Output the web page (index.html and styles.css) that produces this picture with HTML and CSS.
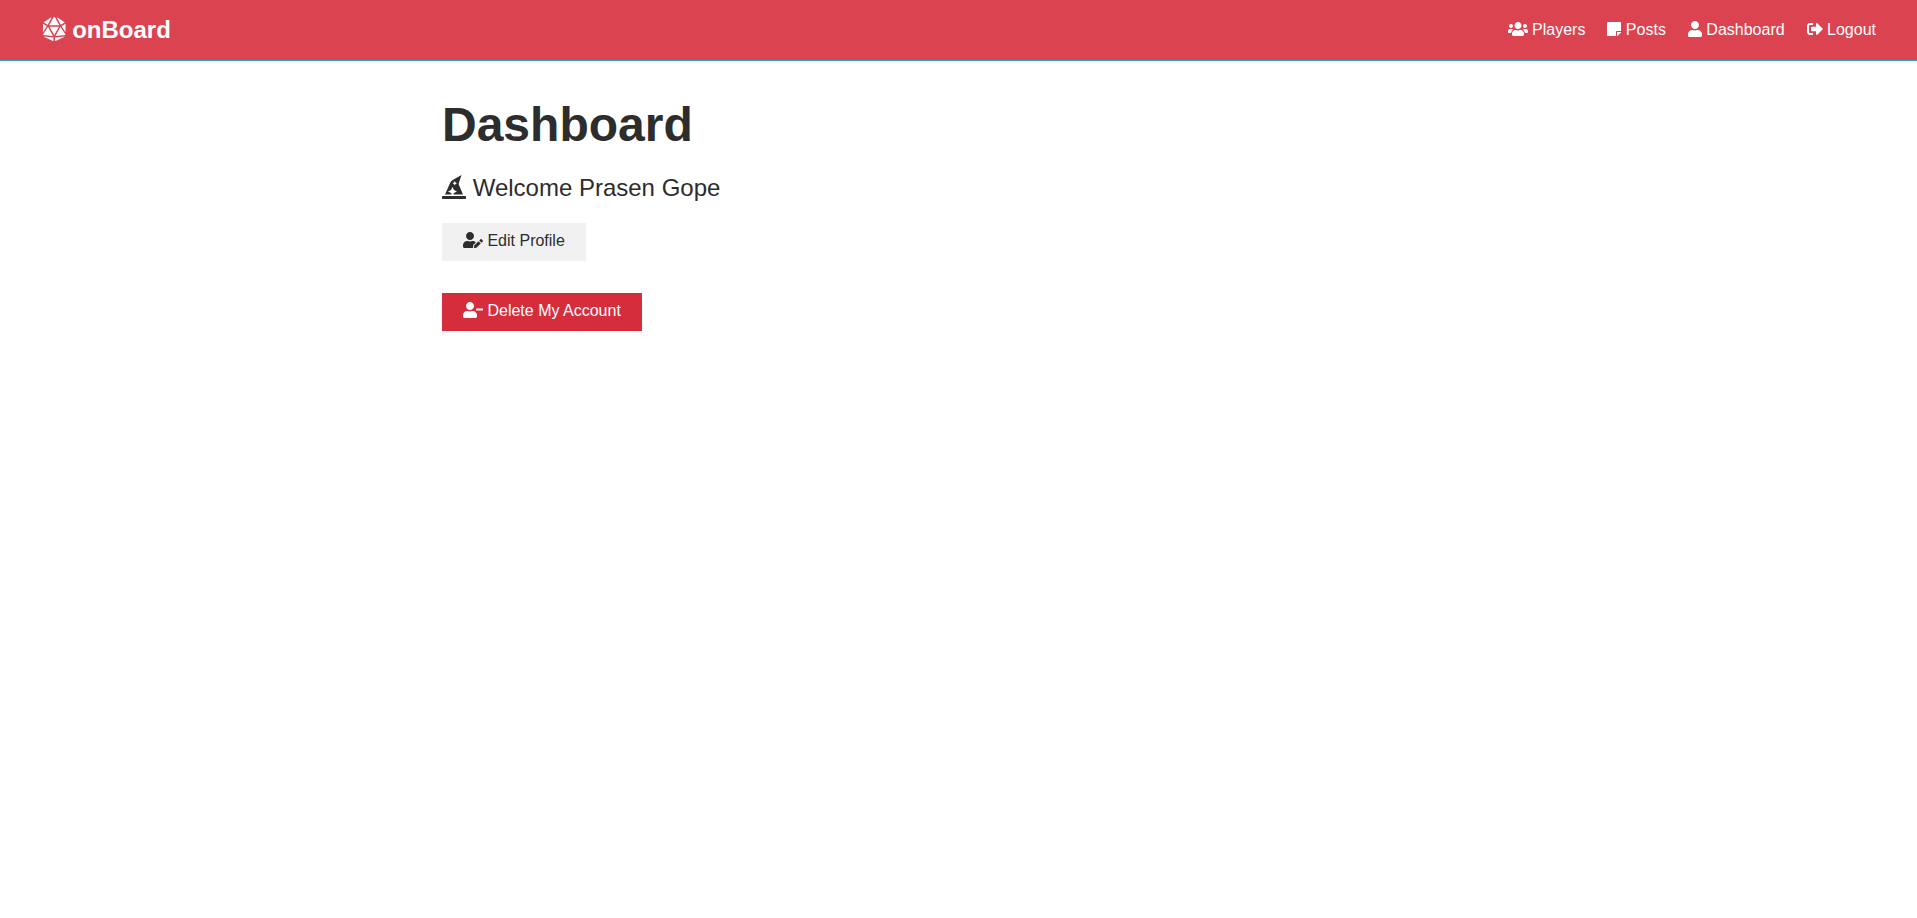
FILE: index.html
```
<!DOCTYPE html>
<html lang="en">
<head>
<meta charset="utf-8">
<meta name="viewport" content="width=device-width, initial-scale=1">
<title>onBoard</title>
<link rel="stylesheet" href="styles.css">
</head>
<body>
<nav class="navbar">
  <h1 class="brand"><a class="nav-link" href="#"><svg class="icon icon-large" viewBox="0 0 480 512" aria-hidden="true"><path d="M106.75 215.06L1.2 370.95c-3.08 5 .1 11.5 5.93 12.14l208.26 22.07-108.64-190.1zM7.41 315.43L82.7 193.08 6.06 147.1c-2.67-1.62-6.06.32-6.06 3.45v162.81c0 4.03 5.29 5.53 7.41 2.07zM18.25 423.6l194.4 87.66c5.3 2.45 11.35-1.43 11.35-7.26v-65.67l-203.55-22.3c-4.45-.5-6.23 5.59-2.2 7.57zm81.22-257.78L179.4 22.88c4.34-7.06-3.59-15.25-10.78-11.14L17.81 110.35c-2.47 1.62-2.39 5.26.13 6.78l81.53 48.69zM240 176h109.21L253.63 7.62C250.5 2.54 245.25 0 240 0s-10.5 2.54-13.63 7.62L130.79 176H240zm233.94-28.9l-76.64 45.99 75.29 122.35c2.11 3.46 7.41 1.96 7.41-2.07V150.55c0-3.13-3.39-5.07-6.06-3.45zm-93.41 18.72l81.53-48.7c2.53-1.52 2.6-5.16.13-6.78l-150.81-98.6c-7.19-4.11-15.12 4.08-10.78 11.14l79.93 142.94zm79.02 250.21L256 438.32v65.67c0 5.84 6.05 9.71 11.35 7.26l194.4-87.66c4.03-1.97 2.25-8.06-2.2-7.56zm-86.3-200.97l-108.63 190.1 208.26-22.07c5.83-.65 9.01-7.14 5.93-12.14L373.25 215.06zM240 208H139.57L240 383.75 340.43 208H240z"/></svg> onBoard</a></h1>
  <ul class="nav-list">
    <li><a class="nav-link" href="#"><svg class="icon icon-wide" viewBox="0 0 640 512" aria-hidden="true"><path d="M96 224c35.300 0 64-28.700 64-64s-28.700-64-64-64-64 28.700-64 64 28.700 64 64 64zm448 0c35.300 0 64-28.700 64-64s-28.700-64-64-64-64 28.700-64 64 28.700 64 64 64zm32 32h-64c-17.600 0-33.500 7.100-45.100 18.600 40.300 22.100 68.900 62 75.100 109.400h66c17.700 0 32-14.300 32-32v-32c0-35.300-28.700-64-64-64zm-256 0c61.900 0 112-50.100 112-112S381.900 32 320 32 208 82.100 208 144s50.100 112 112 112zm76.800 32h-8.300c-20.800 10-43.900 16-68.500 16s-47.600-6-68.500-16h-8.300C179.600 288 128 339.600 128 403.200V432c0 26.500 21.500 48 48 48h288c26.500 0 48-21.500 48-48v-28.800c0-63.600-51.600-115.200-115.200-115.200zm-223.700-13.400C161.500 263.100 145.600 256 128 256H64c-35.300 0-64 28.700-64 64v32c0 17.700 14.300 32 32 32h65.900c6.300-47.400 34.900-87.300 75.200-109.400z"/></svg> Players</a></li>
    <li><a class="nav-link" href="#"><svg class="icon" viewBox="0 0 448 512" aria-hidden="true"><path d="M312 320h136V56c0-13.300-10.700-24-24-24H24C10.700 32 0 42.700 0 56v400c0 13.300 10.700 24 24 24h264V344c0-13.200 10.800-24 24-24zm129 55l-98 98c-4.500 4.500-10.600 7-17 7h-6V352h128v6.100c0 6.300-2.500 12.400-7 16.900z"/></svg> Posts</a></li>
    <li><a class="nav-link" href="#"><svg class="icon" viewBox="0 0 448 512" aria-hidden="true"><path d="M224 256c70.700 0 128-57.300 128-128S294.700 0 224 0 96 57.300 96 128s57.300 128 128 128zm89.600 32h-16.700c-22.200 10.200-46.900 16-72.900 16s-50.600-5.800-72.900-16h-16.700C60.200 288 0 348.200 0 422.400V464c0 26.500 21.500 48 48 48h352c26.500 0 48-21.500 48-48v-41.600c0-74.200-60.200-134.400-134.400-134.400z"/></svg> Dashboard</a></li>
    <li><a class="nav-link" href="#"><svg class="icon" viewBox="0 0 512 512" aria-hidden="true"><path d="M497 273L329 441c-15 15-41 4.500-41-17v-96H152c-13.300 0-24-10.700-24-24v-96c0-13.300 10.700-24 24-24h136V88c0-21.400 25.900-32 41-17l168 168c9.300 9.400 9.300 24.600 0 34zM192 436v-40c0-6.600-5.400-12-12-12H96c-17.700 0-32-14.300-32-32V160c0-17.700 14.300-32 32-32h84c6.600 0 12-5.400 12-12V76c0-6.600-5.400-12-12-12H96c-53 0-96 43-96 96v192c0 53 43 96 96 96h84c6.600 0 12-5.400 12-12z"/></svg> Logout</a></li>
  </ul>
</nav>
<main class="container">
  <h1 class="title">Dashboard</h1>
  <p class="lead"><svg class="icon icon-large" viewBox="0 0 512 512" aria-hidden="true"><path d="M496 448H16c-8.840 0-16 7.160-16 16v32c0 8.840 7.160 16 16 16h480c8.840 0 16-7.160 16-16v-32c0-8.840-7.160-16-16-16zm-304-64l-64-32 64-32 32-64 32 64 64 32-64 32-16 32h208l-86.410-201.630a63.955 63.955 0 0 1-1.890-45.450L416 0 228.420 107.190a127.989 127.989 0 0 0-53.460 59.150L64 416h144l-16-32zm64-224l16-32 16 32 32 16-32 16-16 32-16-32-32-16 32-16z"/></svg> Welcome Prasen Gope</p>
  <div class="actions">
    <a class="btn btn-light" href="#"><svg class="icon icon-wide" viewBox="0 0 640 512" aria-hidden="true"><path d="M224 256c70.700 0 128-57.300 128-128S294.700 0 224 0 96 57.300 96 128s57.300 128 128 128zm89.600 32h-16.700c-22.200 10.200-46.900 16-72.900 16s-50.600-5.800-72.900-16h-16.700C60.200 288 0 348.200 0 422.400V464c0 26.500 21.500 48 48 48h274.900c-2.400-6.800-3.400-14-2.600-21.300l6.800-60.900 1.200-11.100 7.900-7.900 77.300-77.300c-24.500-27.700-60-45.500-99.900-45.500zm45.300 145.300l-6.800 61c-1.100 10.200 7.500 18.800 17.600 17.600l60.900-6.800 137.900-137.900-71.700-71.700-137.900 137.800zM633 268.900L595.100 231c-9.300-9.300-24.500-9.300-33.800 0l-37.800 37.800-4.100 4.100 71.800 71.700 41.800-41.800c9.300-9.400 9.300-24.500 0-33.900z"/></svg> Edit Profile</a>
    <button class="btn btn-danger" type="button"><svg class="icon icon-wide" viewBox="0 0 640 512" aria-hidden="true"><path d="M624 208H432c-8.800 0-16 7.200-16 16v32c0 8.800 7.200 16 16 16h192c8.800 0 16-7.200 16-16v-32c0-8.800-7.200-16-16-16zm-400 48c70.700 0 128-57.300 128-128S294.700 0 224 0 96 57.300 96 128s57.300 128 128 128zm89.600 32h-16.700c-22.200 10.200-46.900 16-72.900 16s-50.600-5.800-72.900-16h-16.700C60.200 288 0 348.200 0 422.400V464c0 26.500 21.500 48 48 48h352c26.500 0 48-21.500 48-48v-41.600c0-74.200-60.200-134.400-134.400-134.400z"/></svg> Delete My Account</button>
  </div>
</main>
</body>
</html>
```
FILE: styles.css
```
* {
  box-sizing: border-box;
  margin: 0;
  padding: 0;
}

body {
  background: #fff;
  color: #2d2d2d;
  font: 16px/26px "Liberation Sans", Arial, sans-serif;
}

a {
  color: inherit;
  text-decoration: none;
}

.icon {
  display: inline-block;
  height: 1em;
  overflow: visible;
  vertical-align: -2px;
  fill: currentColor;
}

.icon-wide {
  width: 20px;
}

.icon-large {
  vertical-align: -3px;
}

.navbar {
  display: flex;
  justify-content: space-between;
  align-items: center;
  padding: 11px 34px 12px 36px;
  border-bottom: 1px solid #2fa9bd;
  background: #db4350;
  color: #fff;
}

.brand {
  font-size: 24px;
  line-height: 37px;
}

.nav-list {
  display: flex;
  gap: 8px;
  list-style: none;
}

.nav-link {
  padding: 7px;
}

.container {
  max-width: 1097px;
  margin: 0 auto;
  padding: 35px 32px;
}

.title {
  margin-bottom: 16px;
  font-size: 48px;
  line-height: 57px;
}

.lead {
  margin-bottom: 16px;
  font-size: 24px;
  line-height: 38px;
}

.actions {
  display: flex;
  flex-direction: column;
  align-items: flex-start;
  gap: 32px;
}

.btn {
  padding: 5px 21px 7px;
  border: 0;
  font: inherit;
  cursor: pointer;
}

.btn-light {
  background: #f1f1f1;
}

.btn-danger {
  background: #d62d3d;
  color: #fff;
}
```
